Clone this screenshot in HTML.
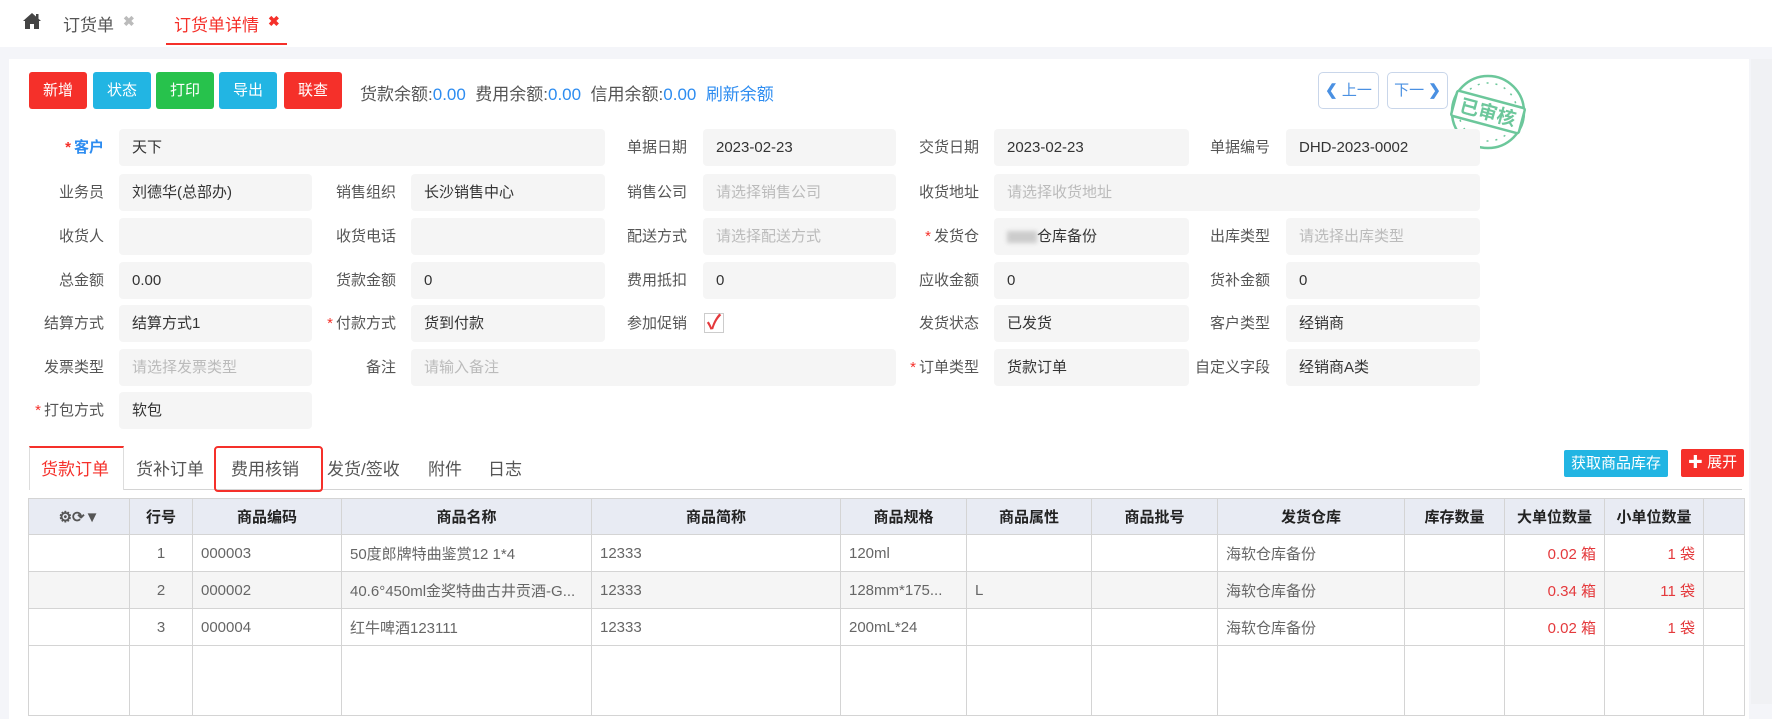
<!DOCTYPE html>
<html><head><meta charset="utf-8"><style>
*{box-sizing:border-box;margin:0;padding:0}
body{width:1772px;height:704px;overflow:hidden;background:#f4f5f9;font-family:"Liberation Sans","Noto Sans CJK SC",sans-serif;font-size:15px;color:#333;position:relative}
.a{position:absolute}
.top{left:0;top:0;width:1772px;height:47px;background:#fff}
.panel{left:9px;top:59px;width:1740px;height:660px;background:#fff}
.btn{position:absolute;top:72px;height:37px;width:58px;color:#fff;border-radius:3px;font-size:15px;line-height:37px;text-align:center}
.lab{position:absolute;text-align:right;width:100px;color:#555;font-size:15px;line-height:37px}
.inp{position:absolute;height:37px;background:#f5f5f5;border-radius:4px;padding-left:13px;line-height:37px;font-size:15px;color:#333}
.ph{color:#bbb}
.req{color:#f5302a;margin-right:3px}
.tab{position:absolute;top:455px;font-size:17px;color:#555}
table{position:absolute;left:28px;top:498px;border-collapse:collapse;table-layout:fixed;width:1716px}
td,th{border:1px solid #d4d4d4;height:37px;font-size:15px;color:#666;padding:0 8px;white-space:nowrap;overflow:hidden}
th{background:#e8ebf3;color:#222;font-weight:bold;height:36px;text-align:center}
.r{color:#e4393c;text-align:right}
.c{text-align:center}
</style></head><body>
<div class="a top"></div>
<svg class="a" style="left:22px;top:12px" width="20" height="18" viewBox="0 0 20 18"><path d="M10 1 L1 9 L3 9 L3 17 L8 17 L8 12 L12 12 L12 17 L17 17 L17 9 L19 9 Z" fill="#444"/><rect x="14" y="2" width="2.5" height="5" fill="#444"/></svg>
<div class="a" style="left:63px;top:11px;font-size:17px;color:#555">订货单</div>
<div class="a" style="left:123px;top:13px;font-size:14px;color:#bbb;font-weight:bold">✖</div>
<div class="a" style="left:174px;top:11px;font-size:17px;color:#f5302a">订货单详情</div>
<div class="a" style="left:268px;top:13px;font-size:14px;color:#f5302a;font-weight:bold">✖</div>
<div class="a" style="left:166px;top:43px;width:121px;height:2px;background:#f5302a"></div>
<div class="a" style="left:1751px;top:59px;width:21px;height:645px;background:#f0f1f4"></div>
<div class="a panel"></div>

<div class="btn" style="left:29px;background:#f5302a">新增</div>
<div class="btn" style="left:93px;background:#22b5e3">状态</div>
<div class="btn" style="left:156px;background:#27c24c">打印</div>
<div class="btn" style="left:219px;background:#22b5e3">导出</div>
<div class="btn" style="left:284px;background:#f5302a">联查</div>
<div class="a" style="left:360px;top:80px;font-size:17px;color:#555">货款余额:<span style="color:#2d8cf0">0.00</span>&nbsp; 费用余额:<span style="color:#2d8cf0">0.00</span>&nbsp; 信用余额:<span style="color:#2d8cf0">0.00</span>&nbsp; <span style="color:#2d8cf0">刷新余额</span></div>

<div class="a" style="left:1318px;top:72px;width:61px;height:37px;border:1px solid #c9d6ea;border-radius:5px;color:#4a90e2;font-size:15px;line-height:35px;text-align:center"><b>❮</b> 上一</div>
<div class="a" style="left:1387px;top:72px;width:61px;height:37px;border:1px solid #c9d6ea;border-radius:5px;color:#4a90e2;font-size:15px;line-height:35px;text-align:center">下一 <b>❯</b></div>
<svg class="a" style="left:1447px;top:72px" width="82" height="80" viewBox="0 0 82 80">
<circle cx="41" cy="40" r="36" fill="none" stroke="#6cc79b" stroke-width="2.5"/>
<circle cx="41" cy="40" r="29" fill="none" stroke="#6cc79b" stroke-width="1.5" stroke-dasharray="2 7"/>
<g transform="rotate(15 41 40)"><rect x="6" y="27" width="70" height="26" fill="#fff" stroke="#6cc79b" stroke-width="2.5" rx="2"/>
<text x="41" y="47" text-anchor="middle" font-size="19" font-weight="bold" fill="#6cc79b" font-family="Noto Sans CJK SC,sans-serif">已审核</text></g></svg>

<!-- form -->
<div class="lab" style="left:4px;top:129px;color:#2d8cf0;font-weight:bold"><span class="req">*</span>客户</div>
<div class="inp" style="left:119px;top:129px;width:486px">天下</div>
<div class="lab" style="left:587px;top:129px">单据日期</div>
<div class="inp" style="left:703px;top:129px;width:193px">2023-02-23</div>
<div class="lab" style="left:879px;top:129px">交货日期</div>
<div class="inp" style="left:994px;top:129px;width:195px">2023-02-23</div>
<div class="lab" style="left:1170px;top:129px">单据编号</div>
<div class="inp" style="left:1286px;top:129px;width:194px">DHD-2023-0002</div>

<div class="lab" style="left:4px;top:174px">业务员</div>
<div class="inp" style="left:119px;top:174px;width:193px">刘德华(总部办)</div>
<div class="lab" style="left:296px;top:174px">销售组织</div>
<div class="inp" style="left:411px;top:174px;width:194px">长沙销售中心</div>
<div class="lab" style="left:587px;top:174px">销售公司</div>
<div class="inp ph" style="left:703px;top:174px;width:193px">请选择销售公司</div>
<div class="lab" style="left:879px;top:174px">收货地址</div>
<div class="inp ph" style="left:994px;top:174px;width:486px">请选择收货地址</div>

<div class="lab" style="left:4px;top:218px">收货人</div>
<div class="inp" style="left:119px;top:218px;width:193px"></div>
<div class="lab" style="left:296px;top:218px">收货电话</div>
<div class="inp" style="left:411px;top:218px;width:194px"></div>
<div class="lab" style="left:587px;top:218px">配送方式</div>
<div class="inp ph" style="left:703px;top:218px;width:193px">请选择配送方式</div>
<div class="lab" style="left:879px;top:218px"><span class="req">*</span>发货仓</div>
<div class="inp" style="left:994px;top:218px;width:195px"><span style="display:inline-block;width:30px;height:12px;background:#ccc;vertical-align:middle;filter:blur(2px)"></span>仓库备份</div>
<div class="lab" style="left:1170px;top:218px">出库类型</div>
<div class="inp ph" style="left:1286px;top:218px;width:194px">请选择出库类型</div>

<div class="lab" style="left:4px;top:262px">总金额</div>
<div class="inp" style="left:119px;top:262px;width:193px">0.00</div>
<div class="lab" style="left:296px;top:262px">货款金额</div>
<div class="inp" style="left:411px;top:262px;width:194px">0</div>
<div class="lab" style="left:587px;top:262px">费用抵扣</div>
<div class="inp" style="left:703px;top:262px;width:193px">0</div>
<div class="lab" style="left:879px;top:262px">应收金额</div>
<div class="inp" style="left:994px;top:262px;width:195px">0</div>
<div class="lab" style="left:1170px;top:262px">货补金额</div>
<div class="inp" style="left:1286px;top:262px;width:194px">0</div>

<div class="lab" style="left:4px;top:305px">结算方式</div>
<div class="inp" style="left:119px;top:305px;width:193px">结算方式1</div>
<div class="lab" style="left:296px;top:305px"><span class="req">*</span>付款方式</div>
<div class="inp" style="left:411px;top:305px;width:194px">货到付款</div>
<div class="lab" style="left:587px;top:305px">参加促销</div>
<div class="a" style="left:704px;top:313px;width:20px;height:20px;border:1px solid #ccc;background:#fff;color:#e4393c;font-size:20px;line-height:18px;text-align:center;font-weight:bold">✓</div>
<div class="lab" style="left:879px;top:305px">发货状态</div>
<div class="inp" style="left:994px;top:305px;width:195px">已发货</div>
<div class="lab" style="left:1170px;top:305px">客户类型</div>
<div class="inp" style="left:1286px;top:305px;width:194px">经销商</div>

<div class="lab" style="left:4px;top:349px">发票类型</div>
<div class="inp ph" style="left:119px;top:349px;width:193px">请选择发票类型</div>
<div class="lab" style="left:296px;top:349px">备注</div>
<div class="inp ph" style="left:411px;top:349px;width:485px">请输入备注</div>
<div class="lab" style="left:879px;top:349px"><span class="req">*</span>订单类型</div>
<div class="inp" style="left:994px;top:349px;width:195px">货款订单</div>
<div class="lab" style="left:1170px;top:349px">自定义字段</div>
<div class="inp" style="left:1286px;top:349px;width:194px">经销商A类</div>

<div class="lab" style="left:4px;top:392px"><span class="req">*</span>打包方式</div>
<div class="inp" style="left:119px;top:392px;width:193px">软包</div>

<!-- tabs -->
<div class="a" style="left:29px;top:489px;width:1713px;height:1px;background:#d4d4d4"></div>
<div class="a" style="left:29px;top:446px;width:95px;height:44px;background:#fff;border-top:2px solid #f5302a;border-left:1px solid #ddd;border-right:1px solid #ddd"></div>
<div class="tab" style="left:41px;color:#f5302a">货款订单</div>
<div class="tab" style="left:136px">货补订单</div>
<div class="a" style="left:214px;top:446px;width:109px;height:46px;border:2px solid #f5302a;border-radius:4px"></div>
<div class="tab" style="left:231px">费用核销</div>
<div class="tab" style="left:327px">发货/签收</div>
<div class="tab" style="left:428px">附件</div>
<div class="tab" style="left:488px">日志</div>
<div class="a" style="left:1564px;top:450px;width:104px;height:27px;background:#22b5e3;color:#fff;font-size:15px;line-height:27px;text-align:center;border-radius:2px">获取商品库存</div>
<div class="a" style="left:1681px;top:449px;width:63px;height:28px;background:#f5302a;color:#fff;font-size:15px;line-height:28px;text-align:center;border-radius:2px"><b>✚</b> 展开</div>

<table>
<colgroup><col style="width:101px"><col style="width:63px"><col style="width:149px"><col style="width:250px"><col style="width:249px"><col style="width:126px"><col style="width:125px"><col style="width:126px"><col style="width:187px"><col style="width:100px"><col style="width:100px"><col style="width:99px"><col style="width:41px"></colgroup>
<tr><th style="font-size:15px;color:#555">⚙⟳▼</th><th>行号</th><th>商品编码</th><th>商品名称</th><th>商品简称</th><th>商品规格</th><th>商品属性</th><th>商品批号</th><th>发货仓库</th><th>库存数量</th><th>大单位数量</th><th>小单位数量</th><th></th></tr>
<tr><td></td><td class="c">1</td><td>000003</td><td>50度郎牌特曲鉴赏12 1*4</td><td>12333</td><td>120ml</td><td></td><td></td><td>海软仓库备份</td><td></td><td class="r">0.02 箱</td><td class="r">1 袋</td><td></td></tr>
<tr style="background:#f5f5f5"><td></td><td class="c">2</td><td>000002</td><td>40.6°450ml金奖特曲古井贡酒-G...</td><td>12333</td><td>128mm*175...</td><td>L</td><td></td><td>海软仓库备份</td><td></td><td class="r">0.34 箱</td><td class="r">11 袋</td><td></td></tr>
<tr><td></td><td class="c">3</td><td>000004</td><td>红牛啤酒123111</td><td>12333</td><td>200mL*24</td><td></td><td></td><td>海软仓库备份</td><td></td><td class="r">0.02 箱</td><td class="r">1 袋</td><td></td></tr>
<tr><td style="height:70px"></td><td></td><td></td><td></td><td></td><td></td><td></td><td></td><td></td><td></td><td></td><td></td><td></td></tr>
</table>
</body></html>
